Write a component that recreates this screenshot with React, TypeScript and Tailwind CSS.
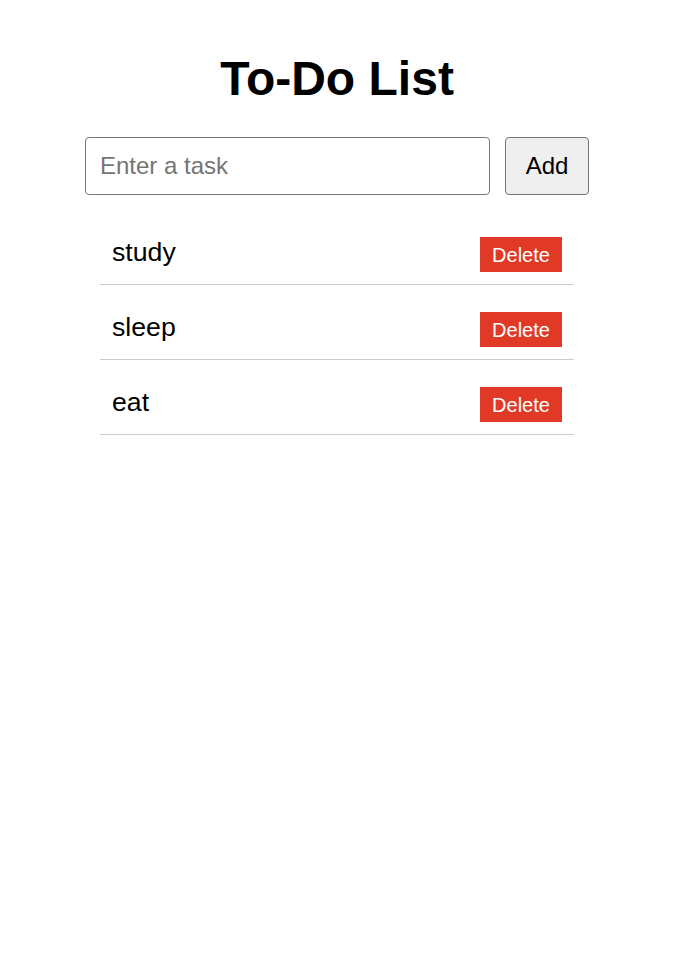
import React, { useState } from "react";

const App = () => {
  const [tasks, setTasks] = useState<string[]>(["study", "sleep", "eat"]);
  const [text, setText] = useState("");

  const addTask = () => {
    if (!text.trim()) return;
    setTasks([...tasks, text.trim()]);
    setText("");
  };

  return (
    <div className="w-[674px] min-h-screen bg-white font-['Liberation_Sans',Arial,sans-serif] text-black">
      <div className="mx-auto w-[504px] pt-[51px]">
        <h1 className="text-center text-[48px] font-bold leading-[55px]">To-Do List</h1>

        <div className="mt-[31px] flex gap-[15px]">
          <input
            value={text}
            onChange={(e) => setText(e.target.value)}
            placeholder="Enter a task"
            className="h-[58px] w-[405px] rounded-[4px] border border-[#767676] px-[14px] text-[24px] outline-none placeholder:text-[#757575]"
          />
          <button
            onClick={addTask}
            className="h-[58px] w-[84px] rounded-[4px] border border-[#767676] bg-[#efefef] text-[24px]"
          >
            Add
          </button>
        </div>

        <ul className="mx-[15px] mt-[30px]">
          {tasks.map((task, index) => (
            <li
              key={index}
              className="mt-[15px] flex items-center justify-between border-b border-[#cccccc] p-[12px] first:mt-0"
            >
              <span className="pb-[4px] text-[26.67px] leading-[31px]">{task}</span>
              <button
                onClick={() => setTasks(tasks.filter((_, i) => i !== index))}
                className="h-[35px] w-[82px] bg-[#e03a26] text-[20px] text-white"
              >
                Delete
              </button>
            </li>
          ))}
        </ul>
      </div>
    </div>
  );
};

export default App;
